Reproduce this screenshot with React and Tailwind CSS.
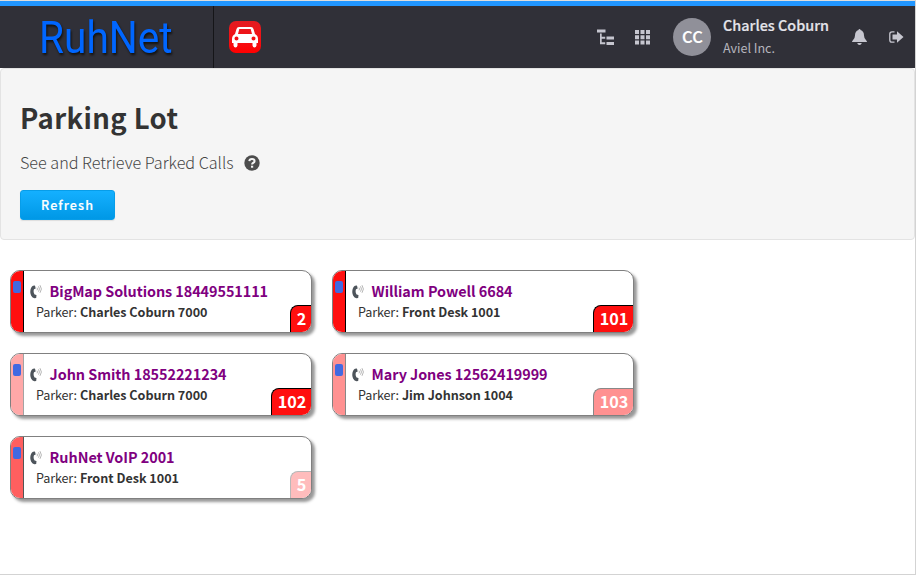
const calls = [
  { name: "BigMap Solutions 18449551111", parker: "Charles Coburn 7000", slot: "2", strip: "bg-[#ff0f0f] border-black", badge: "bg-[#ff0f0f] border-black", nameW: 218.5, parkerW: 127.5, badgeW: "w-[21px]" },
  { name: "William Powell 6684", parker: "Front Desk 1001", slot: "101", strip: "bg-[#ff0f0f] border-black", badge: "bg-[#ff0f0f] border-black", nameW: 141, parkerW: 98.5, badgeW: "w-[40px]" },
  { name: "John Smith 18552221234", parker: "Charles Coburn 7000", slot: "102", strip: "bg-[#ffa8a8] border-[#a3a3a3]", badge: "bg-[#ff0f0f] border-black", nameW: 177, parkerW: 127.5, badgeW: "w-[40px]" },
  { name: "Mary Jones 12562419999", parker: "Jim Johnson 1004", slot: "103", strip: "bg-[#ff9191] border-[#888]", badge: "bg-[#ff9191] border-[#888]", nameW: 176, parkerW: 111, badgeW: "w-[40px]" },
  { name: "RuhNet VoIP 2001", parker: "Front Desk 1001", slot: "5", strip: "bg-[#ff5f5f] border-[#555]", badge: "bg-[#ffbcbc] border-[#b8b8b8]", nameW: 125, parkerW: 99, badgeW: "w-[21px]" },
];

// One line of text set to a fixed width; semi thickens the medium weight.
function Line({ w, h, size, base, x = 0, weight = 400, fill, semi = false, className = "", children }) {
  return (
    <svg width={Math.ceil(w) + 2} height={h} className={`block shrink-0 overflow-visible ${className}`}>
      <text x={x} y={base} fontSize={size} fontWeight={semi ? 500 : weight} fill={fill} stroke={semi ? fill : "none"} strokeWidth="0.2" textLength={w}>{children}</text>
    </svg>
  );
}

function PhoneIcon() {
  return (
    <svg width="13" height="14" viewBox="0 0 13 14" className="block shrink-0">
      <path d="M3 .8 5 .4l.7 3-1.700.9C3.300 6 3.600 8 4.600 9.600l1.900.3-.3 3.100-1.900.3C1.300 12.300.1 9 .3 6 .5 3.500 1.500 1.600 3 .8Z" fill="#4d545b" />
      <path d="M7 2.700q1 1.300 0 2.600M8.500 1.300q1.900 2.700 0 5.400M10 .2q2.800 3.800 0 7.600" fill="none" stroke="#a3a3a3" strokeWidth=".8" />
    </svg>
  );
}

function HelpIcon() {
  return (
    <svg width="16" height="16" viewBox="0 0 16 16" className="-mt-px ml-2 block">
      <circle cx="8" cy="8" r="7.700" fill="#4d4d4d" />
      <path d="M5.300 6.200Q5.500 4 8 4t2.600 2.100Q10.600 7.300 9 8q-.9.400-.9 1.400" fill="none" stroke="#f5f5f5" strokeWidth="2" />
      <path d="M7 10.700h2.200v2H7Z" fill="#f5f5f5" />
    </svg>
  );
}

function CallCard({ c }) {
  return (
    <div className="flex h-[63px] w-[302px] overflow-hidden rounded-[10px] border border-[#808080] bg-white shadow-[3px_3px_3px_#999]">
      <div className={`w-[13px] shrink-0 border-r pl-0.5 pt-[10px] ${c.strip}`}>
        <div className="h-3 w-2 rounded-[2px] bg-[#4169e1]" />
      </div>
      <div className="flex-1 pl-[6px] pt-[10px]">
        <div className="flex h-[22px]">
          <div className="w-[19px] pt-1"><PhoneIcon /></div>
          <Line w={c.nameW} h={22} size={14.4} base={16} x={0.6} weight={700} fill="#800080">{c.name}</Line>
        </div>
        <div className="flex h-5 pl-[6px]">
          <Line w={41} h={20} size={12.6} base={14} fill="#333">Parker:</Line>
          <Line w={c.parkerW} h={20} size={12.6} base={14} weight={700} fill="#333" className="ml-px">{c.parker}</Line>
        </div>
      </div>
      <div className={`h-[27px] shrink-0 self-end rounded-tl-[8px] border-l border-t pl-px text-center text-[16.200px] font-bold leading-[25px] text-white ${c.badgeW} ${c.badge}`}>{c.slot}</div>
    </div>
  );
}

export default function App() {
  return (
    <div className="h-[575px] w-[916px] overflow-hidden border-r border-b border-[#d3d3d3] bg-white [font-family:'Noto_Sans_CJK_SC',sans-serif]">
      <div className="h-px bg-[#ddd]" />
      <header className="flex h-[67px] border-t-[5px] border-[#2196ff] bg-[#303038]">
        <div className="flex w-[214px] shrink-0 border-r border-[#151518] pl-[41px] pt-2">
          <svg width="140" height="48" className="block overflow-visible drop-shadow-[1px_2px_1px_#111]">
            <text x="-2" y="38.500" fontSize="44" fontWeight="400" fill="#0066ff" fontFamily="Roboto, sans-serif" textLength="133.500" lengthAdjust="spacingAndGlyphs">RuhNet</text>
          </svg>
        </div>
        <div className="ml-[15px] mt-[15px] flex h-8 w-8 shrink-0 items-center justify-center rounded-[7px] bg-linear-to-b from-[#e41b20] to-[#ff0000]">
          <svg width="26" height="21" viewBox="0 0 26 21">
            <path fillRule="evenodd" fill="#fff" d="M7 0h12q2 0 2.500 2l1.500 5q3 1.500 3 5v4h-1.500v2.500q-.3 2-2 2t-2-2V16H5.500v2.500q-.3 2-2 2t-2-2V16H0v-4q0-3.500 3-5l1.500-5Q5 0 7 0Zm.3 2L6 7h14l-1.300-5ZM4.500 9.500a2 2 0 1 0 0 4 2 2 0 0 0 0-4Zm17 0a2 2 0 1 0 0 4 2 2 0 0 0 0-4Z" />
          </svg>
        </div>
        <div className="ml-auto flex h-[62px] items-center">
          <svg width="17" height="17" viewBox="0 0 17 17" fill="#c6c6cf" className="mr-[21px]">
            <path d="M0 .5h8.500v3H0ZM9.500 7.500H17v3H9.500ZM9.500 13H17v3H9.500ZM3 4.500h1.700v3.300h3.500v2H4.700v3.500h3.500v2H3Z" />
          </svg>
          <svg width="15" height="15" viewBox="0 0 15 15" fill="#c6c6cf" className="mr-[23px]">
            <path d="M0 0h4v4H0ZM5.500 0h4v4h-4ZM11 0h4v4h-4ZM0 5.300h4v4H0ZM5.500 5.300h4v4h-4ZM11 5.300h4v4h-4ZM0 10.600h4v4H0ZM5.500 10.600h4v4h-4ZM11 10.600h4v4h-4Z" />
          </svg>
          <div className="mr-3 flex h-[38px] w-[38px] items-center justify-center rounded-full bg-[#909099]">
            <Line w={21} h={20} size={16.5} base={16} semi fill="#fff" className="-mr-0.5">CC</Line>
          </div>
          <div className="w-[129px]">
            <Line w={106} h={22} size={14.4} base={15} semi fill="#e4e4ea">Charles Coburn</Line>
            <Line w={52} h={20} size={12.6} base={15} fill="#b5b5bd">Aviel Inc.</Line>
          </div>
          <svg width="15" height="16" viewBox="0 0 15 16" fill="#c6c6cf" className="mr-[22px]">
            <path d="M6.500 1Q6.500 0 7.500 0t1 1q3.500 1 3.500 5.500 0 3 2.300 5 .7.6.7 1.500H0q0-.9.700-1.500 2.300-2 2.300-5Q3 2 6.500 1ZM5.200 14h4.600q-.5 2-2.300 2t-2.300-2Z" />
          </svg>
          <svg width="15" height="12" viewBox="0 0 15 12" className="mr-[11px]">
            <path d="M5.500.8H3Q.8.800.8 3v6Q.8 11.200 3 11.200h2.500" fill="none" stroke="#c6c6cf" strokeWidth="1.300" />
            <path d="M3.500 3.500h4.500V.3l6.500 5.700L8 11.700V8.500H3.500Z" fill="#c6c6cf" />
          </svg>
        </div>
      </header>
      <section className="h-[172px] rounded-[4px] border border-[#e3e3e3] bg-[#f5f5f5] pl-[19px] pt-[31px]">
        <Line w={158} h={40} size={27.5} base={29} weight={700} fill="#333">Parking Lot</Line>
        <div className="mt-[11px] flex h-6 items-center">
          <Line w={213.5} h={24} size={16.200} base={18} weight={300} fill="#444">See and Retrieve Parked Calls</Line>
          <HelpIcon />
        </div>
        <button className="mt-[15px] flex h-[30px] w-[95px] items-center justify-center rounded-[3px] border border-[#079de9] bg-linear-to-b from-[#14b0ff] to-[#0098e6] shadow-[0_1px_1px_#ddd]">
          <Line w={52} h={20} size={12.6} base={15} semi fill="#fff">Refresh</Line>
        </button>
      </section>
      <main className="ml-[10px] mt-[30px] grid w-[625px] grid-cols-[302px_302px] gap-x-5 gap-y-5">
        {calls.map((c) => <CallCard key={c.slot} c={c} />)}
      </main>
    </div>
  );
}
